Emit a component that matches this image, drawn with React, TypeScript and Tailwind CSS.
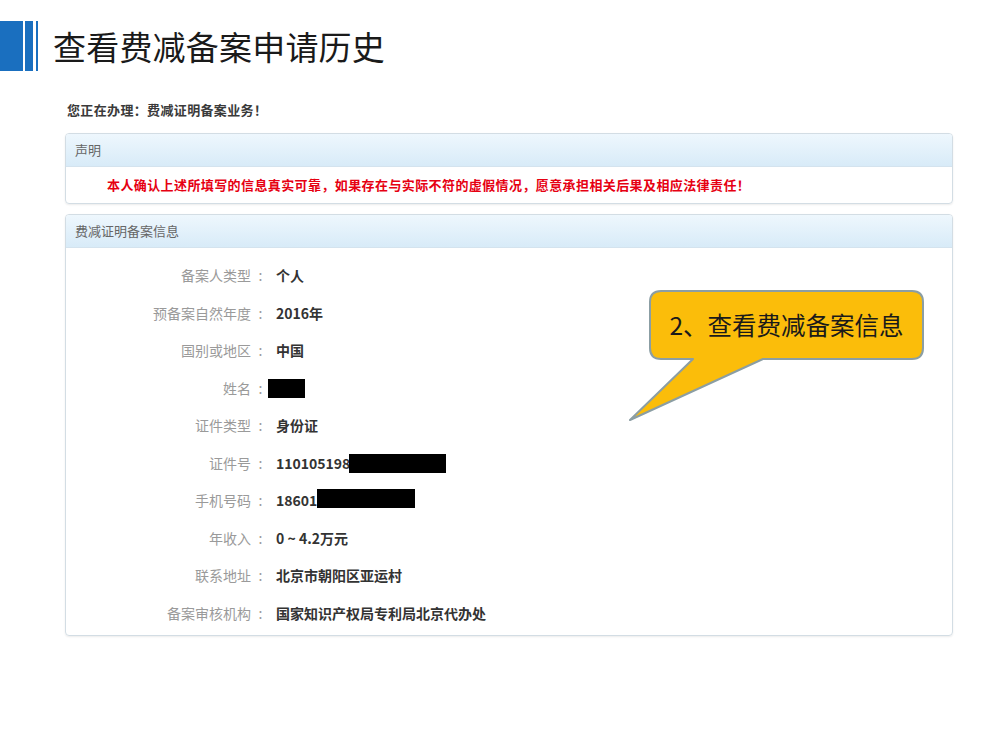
import React from "react";

const rows: { label: string; value: string; box?: { left: number; top: number; w: number; h: number } }[] = [
  { label: "备案人类型", value: "个人" },
  { label: "预备案自然年度", value: "2016年" },
  { label: "国别或地区", value: "中国" },
  { label: "姓名", value: "", box: { left: -8, top: -9, w: 37, h: 19 } },
  { label: "证件类型", value: "身份证" },
  { label: "证件号", value: "110105198", box: { left: 73, top: -9, w: 97, h: 19 } },
  { label: "手机号码", value: "18601", box: { left: 41, top: -12, w: 98, h: 19 } },
  { label: "年收入", value: "0 ~ 4.2万元" },
  { label: "联系地址", value: "北京市朝阳区亚运村" },
  { label: "备案审核机构", value: "国家知识产权局专利局北京代办处" },
];

export default function App() {
  return (
    <div className="relative w-[1000px] h-[750px] overflow-hidden bg-white font-['Noto_Sans_CJK_SC','Noto_Sans',sans-serif]">
      {/* Title bar */}
      <div className="flex items-center pt-[21px]">
        <div className="flex h-[50px]">
          <div className="w-[23px] h-full bg-[#1a6fbf]" />
          <div className="ml-[2px] w-[8px] h-full bg-[#1a6fbf]" />
          <div className="ml-[3px] w-[2px] h-full bg-[#1a6fbf]" />
        </div>
        <div className="ml-[15px] text-[33px] leading-[50px] text-[#1a1a1a] tracking-[0.2px]">查看费减备案申请历史</div>
      </div>

      <div className="ml-[65px] w-[888px]">
        <div className="mt-[29px] ml-[2px] h-[20px] text-[13px] leading-[20px] font-bold text-[#3a3a3a] tracking-[0.35px]">您正在办理：费减证明备案业务！</div>

        {/* Panel 1 */}
        <div className="mt-[13px] rounded-[4px] border border-[#d3dde4] shadow-[0_1px_2px_rgba(0,0,0,0.08)] overflow-hidden">
          <div className="h-[33px] flex items-center px-[9px] bg-gradient-to-b from-[#eef7fd] to-[#d8ebf8] border-b border-[#d4e3ee] text-[13px] text-[#666]">声明</div>
          <div className="h-[36px] flex items-center pl-[41px] text-[13px] font-bold text-[#e60012] tracking-[0.4px]">
            本人确认上述所填写的信息真实可靠，如果存在与实际不符的虚假情况，愿意承担相关后果及相应法律责任！
          </div>
        </div>

        {/* Panel 2 */}
        <div className="mt-[10px] rounded-[4px] border border-[#d3dde4] shadow-[0_1px_2px_rgba(0,0,0,0.08)] overflow-hidden">
          <div className="h-[33px] flex items-center px-[9px] bg-gradient-to-b from-[#eef7fd] to-[#d8ebf8] border-b border-[#d4e3ee] text-[13px] text-[#666]">费减证明备案信息</div>
          <div className="pt-[9px] pb-[3px]">
            {rows.map((r) => (
              <div key={r.label} className="flex items-center h-[37.5px]">
                <div className="w-[185px] text-right text-[14px] text-[#9a9a9a]">{r.label}</div>
                <div className="w-[19px] text-center text-[14px] text-[#9a9a9a]">:</div>
                <div className="relative ml-[6px] text-[14px] font-bold text-[#333]">
                  {r.value || "\u00a0"}
                  {r.box && (
                    <div
                      className="absolute bg-black"
                      style={{ left: r.box.left, top: `calc(50% + ${r.box.top}px)`, width: r.box.w, height: r.box.h }}
                    />
                  )}
                </div>
              </div>
            ))}
          </div>
        </div>
      </div>

      {/* Callout */}
      <div className="absolute left-[620px] top-[285px] w-[310px] h-[140px]">
        <svg width="310" height="140" viewBox="0 0 310 140" className="absolute left-0 top-0">
          <path
            d="M 41 6 H 292 Q 303 6 303 17 V 63 Q 303 74 292 74 H 143 L 10 135 L 73 74 H 41 Q 30 74 30 63 V 17 Q 30 6 41 6 Z"
            fill="#fbbd0a"
            stroke="#8b9ea4"
            strokeWidth="2"
            strokeLinejoin="round"
          />
        </svg>
        <div className="absolute left-[30px] top-[6px] w-[273px] h-[68px] flex items-center justify-center text-[24.5px] text-[#1a1a1a]">
          2、查看费减备案信息
        </div>
      </div>
    </div>
  );
}
